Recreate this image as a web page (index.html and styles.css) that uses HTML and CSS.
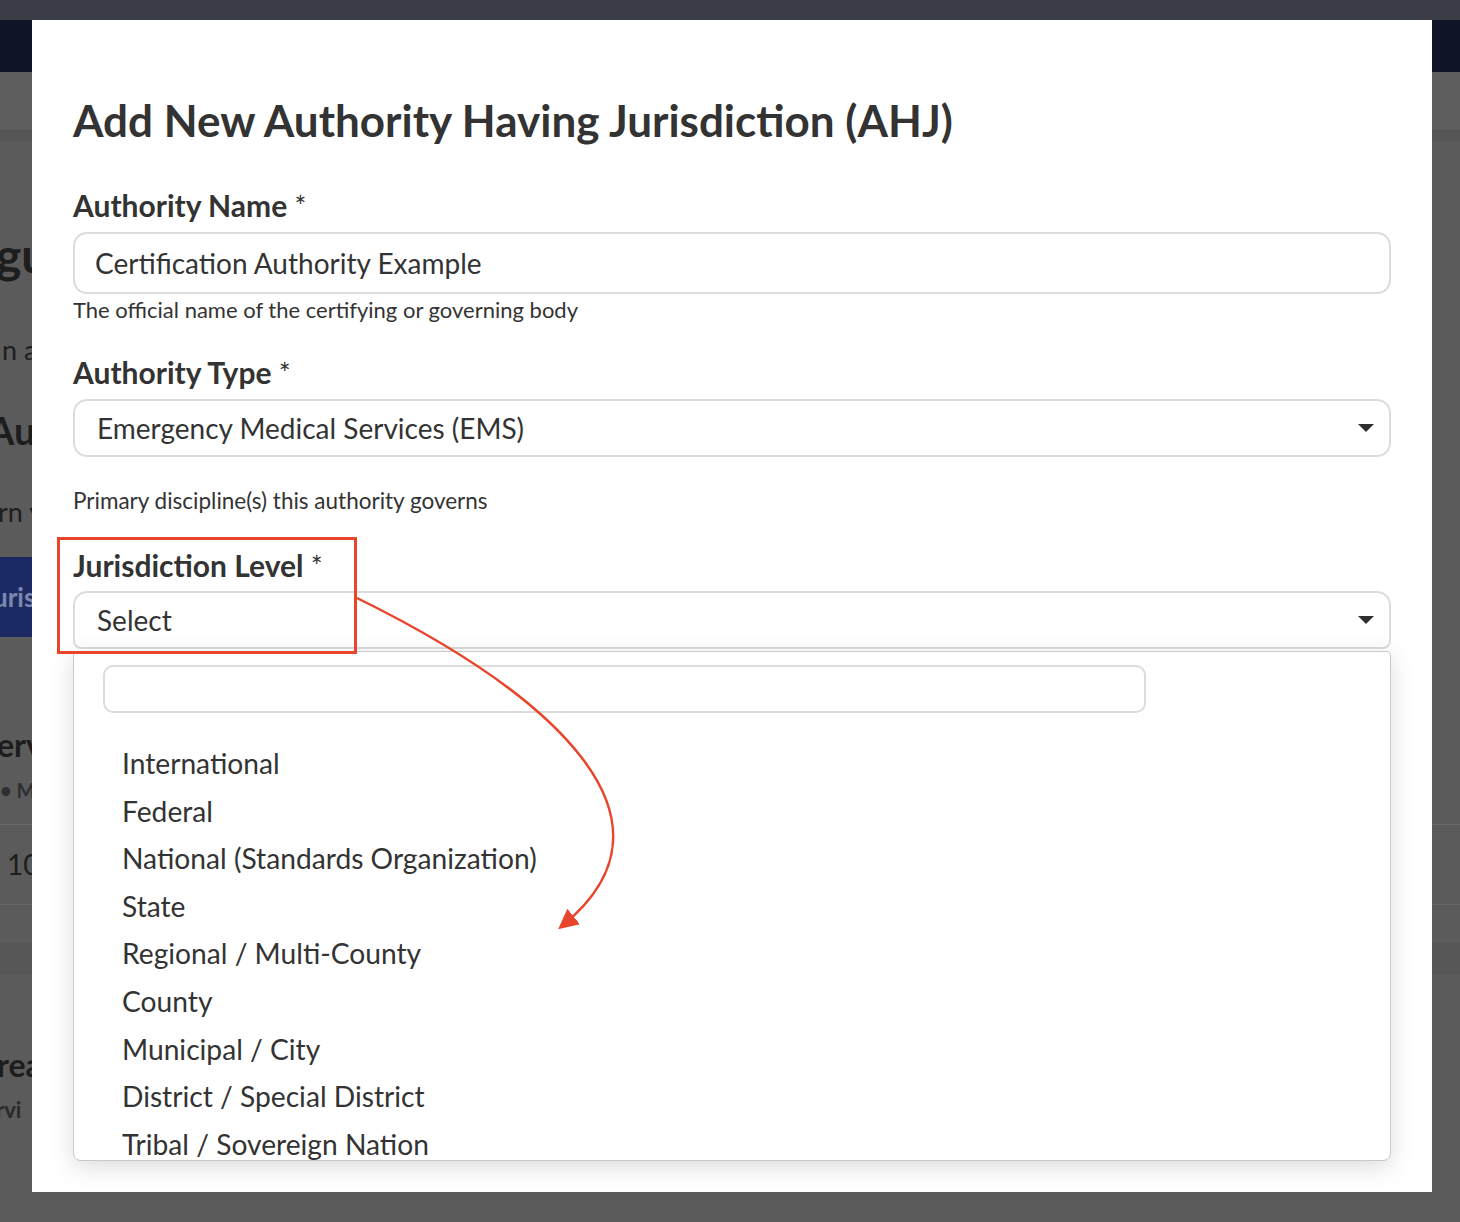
FILE: index.html
```html
<!DOCTYPE html>
<html>
   <head>
      <meta charset="UTF-8">
      <meta name="viewport" content="width=device-width, initial-scale=1.0">
      <title>Add New Authority Having Jurisdiction</title>
      <link rel="stylesheet" href="styles.css">
   </head>
   <body>
      <!-- page behind the modal, already dimmed; only its left edge shows -->
      <div class="bg-page">
         <div class="bg-top"></div>
         <div class="bg-nav"></div>
         <div class="bg-sub"></div>
         <div class="bg-band"></div>
         <div class="bg-content">
            <div class="bg-heading">gu</div>
            <div class="bg-text">n a</div>
            <div class="bg-subheading">Au</div>
            <div class="bg-text bg-text-2">rn y</div>
            <div class="bg-button"><span>uris</span></div>
            <div class="bg-card-title">erv</div>
            <div class="bg-meta">• M</div>
            <div class="bg-row">10</div>
            <div class="bg-strip"></div>
            <div class="bg-card-title bg-card-title-2">rea</div>
            <div class="bg-meta-2">rvi</div>
         </div>
      </div>

      <div class="modal">
         <h1 class="modal-title">Add New Authority Having Jurisdiction (AHJ)</h1>

         <div class="field">
            <label class="field-label">Authority Name <span class="req">*</span></label>
            <div class="input">Certification Authority Example</div>
            <div class="help">The official name of the certifying or governing body</div>
         </div>

         <div class="field field-type">
            <label class="field-label">Authority Type <span class="req">*</span></label>
            <div class="select">
               <span>Emergency Medical Services (EMS)</span>
               <span class="caret"></span>
            </div>
            <div class="help help-spaced">Primary discipline(s) this authority governs</div>
         </div>

         <div class="field field-level">
            <label class="field-label">Jurisdiction Level <span class="req">*</span></label>
            <div class="select-wrap">
               <div class="select select-open">
                  <span>Select</span>
                  <span class="caret"></span>
               </div>
               <div class="dropdown">
                  <div class="dropdown-search"></div>
                  <ul class="dropdown-list">
                     <li>International</li>
                     <li>Federal</li>
                     <li>National (Standards Organization)</li>
                     <li>State</li>
                     <li>Regional / Multi-County</li>
                     <li>County</li>
                     <li>Municipal / City</li>
                     <li>District / Special District</li>
                     <li>Tribal / Sovereign Nation</li>
                  </ul>
               </div>
            </div>
         </div>

         <!-- fields hidden under the open list -->
         <div class="field field-hidden">
            <div class="textarea"></div>
            <div class="input input-dark"></div>
         </div>
      </div>

      <svg class="annotation" width="1460" height="1222" viewBox="0 0 1460 1222">
         <defs>
            <marker id="head" markerWidth="8" markerHeight="8" refX="6" refY="4" orient="auto" markerUnits="strokeWidth">
               <path d="M0,0 L8,4 L0,8 Z" fill="#e8452c"/>
            </marker>
         </defs>
         <rect x="58.5" y="538.5" width="297" height="114" fill="none" stroke="#e8452c" stroke-width="3"/>
         <path d="M357,598 C548,692 695,818 562,926" fill="none" stroke="#e8452c" stroke-width="2.5" marker-end="url(#head)"/>
      </svg>
   </body>
</html>
```

FILE: styles.css
```css
body {
   margin: 0;
   background-color: #5b5b5b;
   font-family: Lato, "Open Sans", sans-serif;
   color: #333333;
   overflow: hidden;
   width: 1460px;
   height: 1222px;
}

/* background page */
.bg-page {
   width: 1460px;
   height: 1222px;
}
.bg-top {
   height: 20px;
   background-color: #3a3d45;
}
.bg-nav {
   height: 52px;
   background-color: #0f1526;
}
.bg-sub {
   height: 58px;
   background-color: #5d5d5d;
}
.bg-band {
   height: 11px;
   background-color: #565656;
   border-top: 1px solid #515151;
   box-sizing: border-box;
}
.bg-content {
   color: #1d1d1d;
   white-space: nowrap;
}
.bg-heading {
   margin-top: 84px;
   margin-left: -4px;
   font-size: 48px;
   font-weight: 700;
   line-height: 60px;
}
.bg-text {
   margin-top: 50px;
   margin-left: 2px;
   font-size: 27px;
   line-height: 30px;
}
.bg-text-2 {
   margin-top: 47px;
   margin-left: -2px;
}
.bg-subheading {
   margin-top: 45px;
   margin-left: -12px;
   font-size: 38px;
   font-weight: 700;
   line-height: 40px;
}
.bg-button {
   margin-top: 30px;
   height: 80px;
   width: 200px;
   background-color: #1c2a63;
   display: flex;
   align-items: center;
   color: #7d87ad;
   font-size: 26px;
   font-weight: 700;
}
.bg-button span {
   margin-left: -7px;
}
.bg-card-title {
   margin-top: 88px;
   margin-left: -3px;
   font-size: 32px;
   font-weight: 700;
   line-height: 40px;
}
.bg-meta {
   margin-top: 13px;
   font-size: 20px;
   font-weight: 700;
   line-height: 24px;
   color: #2e2e33;
   padding-bottom: 22px;
   border-bottom: 1px solid #6a6a6a;
}
.bg-row {
   height: 79px;
   line-height: 79px;
   font-size: 28px;
   padding-left: 7px;
   border-bottom: 1px solid #666666;
}
.bg-strip {
   margin-top: 38px;
   height: 32px;
   background-color: #575757;
}
.bg-card-title-2 {
   margin-top: 70px;
}
.bg-meta-2 {
   margin-top: 10px;
   font-size: 22px;
   font-weight: 700;
   line-height: 30px;
   margin-left: -4px;
   color: #2a2a2a;
}

/* modal */
.modal {
   position: fixed;
   left: 32px;
   top: 20px;
   width: 1400px;
   height: 1172px;
   box-sizing: border-box;
   padding: 72px 41px 0 41px;
   background-color: white;
   overflow: hidden;
}
.modal-title {
   margin: 0 0 39px 0;
   font-family: Lato, sans-serif;
   font-size: 44px;
   font-weight: 700;
   line-height: 56px;
   color: #333333;
}
.field {
   display: flex;
   flex-direction: column;
}
.field-label {
   font-size: 30px;
   font-weight: 700;
   line-height: 36px;
   height: 36px;
   margin-bottom: 9px;
}
.req {
   font-weight: 400;
   font-size: 28px;
   line-height: 0;
}
.input {
   height: 62px;
   box-sizing: border-box;
   border: 2px solid #dcdcdc;
   border-radius: 14px;
   padding: 0 20px;
   display: flex;
   align-items: center;
   font-size: 28px;
}
.help {
   margin-top: 4px;
   font-size: 22px;
   line-height: 24px;
}
.help-spaced {
   margin-top: 32px;
   font-size: 22.5px;
}
.field-type {
   margin-top: 32px;
}
.field-level {
   margin-top: 34px;
}
.field-level .field-label {
   margin-bottom: 8px;
}
.select {
   height: 58px;
   box-sizing: border-box;
   border: 2px solid #dcdcdc;
   border-radius: 14px;
   padding: 0 15px 0 22px;
   display: flex;
   align-items: center;
   justify-content: space-between;
   font-size: 28px;
}
.select-open {
   border-bottom-left-radius: 8px;
   border-bottom-right-radius: 8px;
}
.caret {
   width: 0;
   height: 0;
   border-left: 8px solid transparent;
   border-right: 8px solid transparent;
   border-top: 8px solid #2f2f2f;
}
.select-wrap {
   position: relative;
   z-index: 2;
}
.dropdown {
   position: absolute;
   left: 0;
   right: 0;
   top: 60px;
   height: 510px;
   box-sizing: border-box;
   background-color: white;
   border: 1px solid #c9c9c9;
   border-radius: 4px 4px 8px 8px;
   box-shadow: 0 6px 24px rgba(0, 0, 0, 0.14);
   padding: 13px 0 0 29px;
   overflow: hidden;
}
.dropdown-search {
   width: 1043px;
   height: 48px;
   box-sizing: border-box;
   border: 2px solid #dcdcdc;
   border-radius: 10px;
}
.dropdown-list {
   list-style: none;
   margin: 27px 0 0 0;
   padding: 0 0 0 19px;
}
.dropdown-list li {
   height: 47.6px;
   line-height: 47.6px;
   font-size: 28.2px;
   color: #333333;
}
.field-hidden {
   margin-top: 140px;
}
.textarea {
   height: 155px;
   border: 2px solid #d0d0d0;
   border-radius: 10px;
}
.input-dark {
   margin-top: 118px;
   height: 72px;
   border-color: #555555;
}

/* red annotation drawn over the screenshot */
.annotation {
   position: fixed;
   left: 0;
   top: 0;
   pointer-events: none;
   z-index: 10;
}
```
